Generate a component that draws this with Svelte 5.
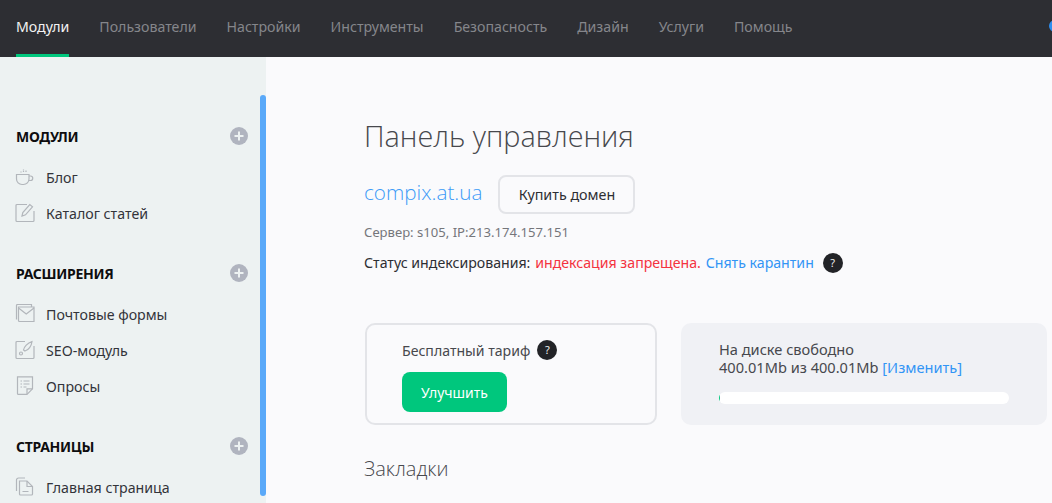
<script lang="ts">
  const nav = ['Модули', 'Пользователи', 'Настройки', 'Инструменты', 'Безопасность', 'Дизайн', 'Услуги', 'Помощь'];
  const groups = [
    { title: 'Модули', items: [{ icon: 'cup', label: 'Блог' }, { icon: 'note', label: 'Каталог статей' }] },
    { title: 'Расширения', items: [{ icon: 'mail', label: 'Почтовые формы' }, { icon: 'seo', label: 'SEO-модуль' }, { icon: 'poll', label: 'Опросы' }] },
    { title: 'Страницы', items: [{ icon: 'page', label: 'Главная страница' }] }
  ];
</script>

<div class="page">
  <header class="topbar">
    <nav class="nav">
      {#each nav as item, i}
        <span class="nav-item" class:active={i === 0}>{item}</span>
      {/each}
    </nav>
    <span class="avatar"></span>
  </header>

  <div class="body">
    <aside class="sidebar">
      <div class="thumb"></div>
      {#each groups as group}
        <section class="group">
          <div class="group-head">
            <h4>{group.title}</h4>
            <svg class="plus" width="18" height="18" viewBox="0 0 18 18">
              <circle cx="9" cy="9" r="9" fill="#b0b4bf" />
              <path d="M9 4.500v9M4.500 9h9" stroke="#edf2f2" stroke-width="2" />
            </svg>
          </div>
          {#each group.items as item}
            <div class="side-item">
              <svg class="ico" width="20" height="20" viewBox="0 0 20 20" fill="none" stroke="#b2b6bb" stroke-width="1.2">
                {#if item.icon === 'cup'}
                  <path d="M1.500 7.500h12.500v4.500a5.500 5.500 0 0 1-5.500 5.500h-1.500a5.500 5.500 0 0 1-5.500-5.500z" />
                  <path d="M14 9h1.500a2 2 0 0 1 0 4.500h-2" />
                  <path d="M6 5.500v-1M8.500 5V2M11 5V3" stroke-dasharray="1.500 1" />
                {:else if item.icon === 'note'}
                  <path d="M12 1.500H2a1 1 0 0 0-1 1v15a1 1 0 0 0 1 1h16a1 1 0 0 0 1-1V8" />
                  <path d="M7 13l.8-3.500 7-8 2.700 2.300-7 8z" />
                {:else if item.icon === 'mail'}
                  <path d="M1.500 15.500V1.500a1 1 0 0 1 1-1h14v2.500" />
                  <path d="M3.500 3h15.500v14.500h-14.500a1 1 0 0 1-1-1z" />
                  <path d="M3.500 4l7.750 6 7.750-6" />
                {:else if item.icon === 'seo'}
                  <path d="M10 1.500H2a1 1 0 0 0-1 1v15a1 1 0 0 0 1 1h16a1 1 0 0 0 1-1V6" />
                  <path d="M8.500 10c.5-3 4-7 8.500-8.500-.5 4.500-3.500 8.500-7 9.500z" />
                  <circle cx="6" cy="13.500" r="1.500" />
                {:else if item.icon === 'poll'}
                  <path d="M2.500 .8h15v12l-5.500 5.500h-9a.5.5 0 0 1-.5-.5z" />
                  <path d="M12 18v-5.200h5.500" />
                  <path d="M5.500 5h1.500M8.500 5h6M5.500 8h1.500M8.500 8h6M5.500 11h1.500M8.500 11h3" />
                {:else}
                  <path d="M1.500 14V3a2 2 0 0 1 2-2h6.500" />
                  <path d="M4.500 4h7.500l5.500 5.500v7.500a1 1 0 0 1-1 1h-11a1 1 0 0 1-1-1z" />
                  <path d="M12 4v5.500h5.500M7.500 14.500h6" />
                {/if}
              </svg>
              <span>{item.label}</span>
            </div>
          {/each}
        </section>
      {/each}
    </aside>

    <main class="main">
      <h1>Панель управления</h1>
      <div class="domain-row">
        <a class="domain" href="#top">compix.at.ua</a>
        <button class="buy">Купить домен</button>
      </div>
      <p class="server">Сервер: s105, IP:213.174.157.151</p>
      <p class="status">
        Статус индексирования: <span class="red">индексация запрещена.</span>
        <a href="#top">Снять карантин</a>
        <span class="help status-help">?</span>
      </p>

      <div class="cards">
        <div class="card tariff">
          <div class="tariff-line">Бесплатный тариф <span class="help">?</span></div>
          <button class="upgrade">Улучшить</button>
        </div>
        <div class="card disk">
          <div class="disk-text">На диске свободно<br />400.01Mb из 400.01Mb <a href="#top">[Изменить]</a></div>
          <div class="bar"><div class="fill"></div></div>
        </div>
      </div>

      <h2>Закладки</h2>
    </main>
  </div>
</div>

<style>
  :global(body) {
    margin: 0;
    overflow: hidden;
  }
  .page {
    width: 1052px;
    height: 503px;
    overflow: hidden;
    font-family: "Noto Sans", "Open Sans", sans-serif;
    font-size: 14px;
    color: #2d2e33;
    background: #fafafc;
  }
  a {
    color: #3295f5;
    text-decoration: none;
  }
  .topbar {
    position: relative;
    height: 57px;
    background: #2d2e33;
    box-sizing: border-box;
    padding-left: 16px;
  }
  .nav {
    display: flex;
    gap: 30px;
    height: 57px;
  }
  .nav-item {
    box-sizing: border-box;
    height: 57px;
    line-height: 53px;
    font-size: 14.17px;
    color: #85868b;
  }
  .nav-item.active {
    color: #f2f2f2;
    border-bottom: 3px solid #00c77d;
  }
  .avatar {
    position: absolute;
    left: 1049px;
    top: 20px;
    width: 12px;
    height: 12px;
    border-radius: 50%;
    background: #2e8ef0;
  }
  .body {
    display: flex;
    height: 446px;
  }
  .sidebar {
    position: relative;
    width: 266px;
    flex: none;
    box-sizing: border-box;
    padding: 68px 16px 0 15px;
    background: #edf2f2;
    overflow: hidden;
  }
  .thumb {
    position: absolute;
    right: 0;
    top: 38px;
    width: 6px;
    height: 401px;
    border-radius: 3px;
    background: #5aa9f9;
  }
  .group {
    margin-bottom: 31px;
  }
  .group-head {
    display: flex;
    align-items: center;
    justify-content: space-between;
    height: 22px;
    margin-bottom: 12px;
    padding-right: 2px;
    padding-left: 1px;
  }
  h4 {
    margin: 0;
    font-size: 14px;
    font-weight: 700;
    text-transform: uppercase;
    color: #0d0d0f;
    letter-spacing: -0.3px;
  }
  .side-item {
    display: flex;
    align-items: center;
    gap: 11px;
    height: 36px;
    font-size: 14.2px;
    color: #33343a;
  }
  .ico {
    flex: none;
  }
  .main {
    flex: 1;
    padding: 59px 0 0 98px;
  }
  h1 {
    margin: 0;
    font-family: "Open Sans", sans-serif;
    font-size: 28.8px;
    line-height: 40px;
    font-weight: 300;
    color: #47484d;
    white-space: nowrap;
  }
  .domain-row {
    display: flex;
    align-items: center;
    gap: 16px;
    margin-top: 19px;
  }
  .domain {
    font-family: "Open Sans", sans-serif;
    font-size: 20.7px;
    font-weight: 300;
    color: #3d9bf7;
    margin-bottom: 5px;
  }
  .buy {
    box-sizing: border-box;
    width: 137px;
    height: 39px;
    border: 2px solid #e3e4e8;
    border-radius: 8px;
    background: transparent;
    font: inherit;
    font-size: 14.3px;
    color: #2d2e33;
    padding: 0;
  }
  .server {
    margin: 9px 0 0;
    font-size: 13.1px;
    line-height: 18px;
    color: #75767b;
  }
  .status {
    margin: 11px 0 0;
    display: flex;
    align-items: center;
    gap: 4.800px;
    line-height: 22px;
    font-size: 14.15px;
    white-space: nowrap;
  }
  .red {
    color: #f4333f;
  }
  .help {
    display: inline-block;
    width: 20px;
    height: 20px;
    line-height: 20px;
    text-align: center;
    border-radius: 50%;
    background: #222327;
    color: #eee;
    font-size: 11px;
  }
  .status-help {
    margin-left: 4px;
  }
  .cards {
    display: flex;
    gap: 24px;
    margin-top: 49px;
    margin-left: 1px;
  }
  .card {
    box-sizing: border-box;
    height: 102px;
    border-radius: 10px;
  }
  .tariff {
    width: 292px;
    border: 2px solid #e3e4e8;
    padding: 14px 0 0 35px;
  }
  .tariff-line {
    display: flex;
    align-items: center;
    gap: 7px;
    height: 22px;
    color: #47484d;
    font-size: 14.1px;
  }
  .upgrade {
    display: block;
    width: 105px;
    height: 40px;
    margin-top: 11px;
    padding: 0;
    border: 0;
    border-radius: 8px;
    background: #00c77d;
    color: #fff;
    font: inherit;
  }
  .disk {
    width: 366px;
    background: #f0f1f5;
    padding: 17px 0 0 38px;
  }
  .disk-text {
    line-height: 18px;
    font-size: 14.6px;
    color: #47484d;
    white-space: nowrap;
  }
  .bar {
    width: 290px;
    height: 12px;
    margin-top: 16px;
    border-radius: 6px;
    background: #fff;
    overflow: hidden;
  }
  .fill {
    width: 1px;
    height: 100%;
    background: #00c77d;
  }
  h2 {
    margin: 32px 0 0;
    font-family: "Open Sans", sans-serif;
    font-size: 20px;
    line-height: 24px;
    font-weight: 300;
    color: #47484d;
  }
</style>
